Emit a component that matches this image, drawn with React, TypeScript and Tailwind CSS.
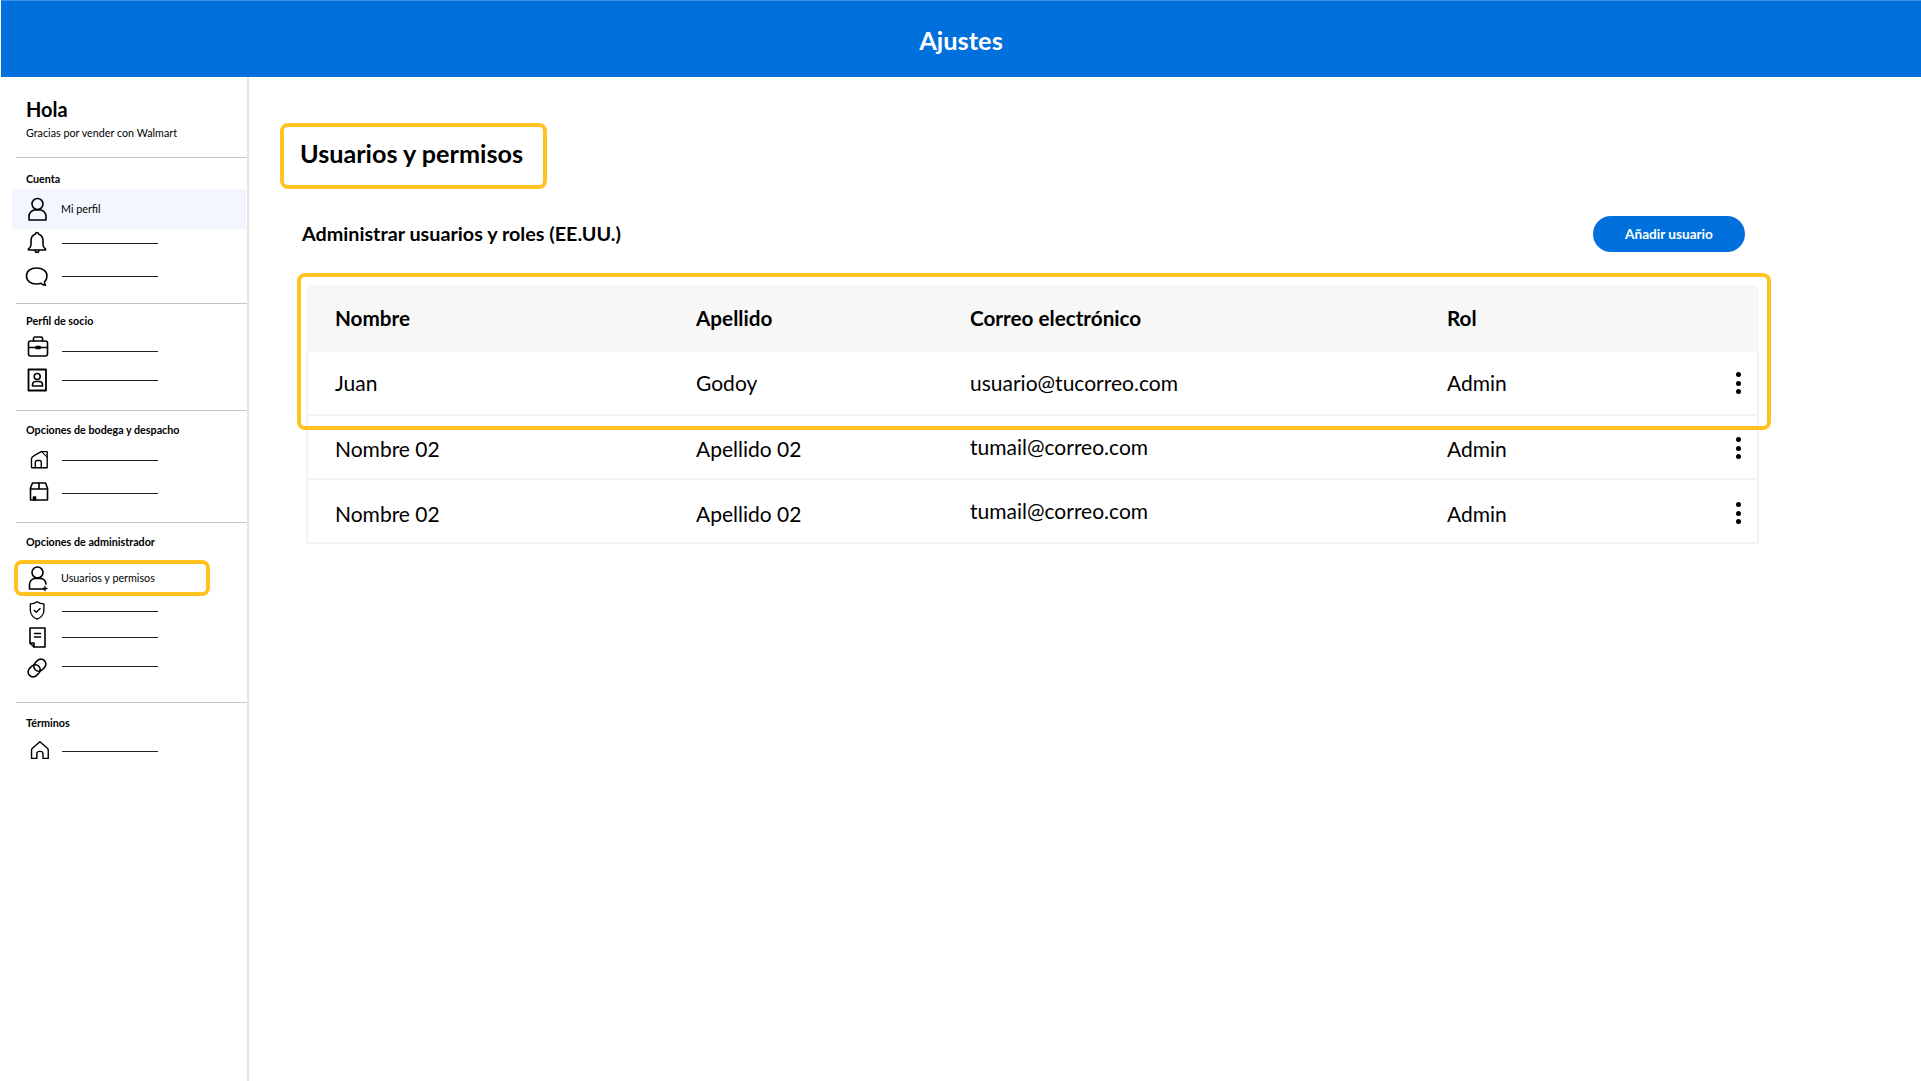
import type { ReactNode } from "react"

const font = "font-['Lato','Liberation_Sans',sans-serif]"

function Icon({ children }: { children: ReactNode }) {
  return (
    <svg viewBox="0 0 24 24" className="w-6 h-6 shrink-0 overflow-visible" fill="none" stroke="black" strokeWidth="1.6" strokeLinejoin="round" strokeLinecap="round">
      {children}
    </svg>
  )
}

const PersonIcon = () => (
  <Icon>
    <circle cx="12.5" cy="7" r="5.5" />
    <path d="M4 23v-4c0-3 3-5.5 5-6h7c2 .5 5 3 5 6v4z" />
  </Icon>
)
const BellIcon = () => (
  <Icon>
    <g transform="translate(-.5 -1)">
      <path d="M12.5 2.5c-1 0-1.5.6-1.5 1.400C8 5 6.500 7.500 6.500 10.500v4c0 2-1 3.500-2.500 4.500v1h17v-1c-1.500-1-2.500-2.500-2.500-4.500v-4c0-3-1.500-5.500-4.500-6.600 0-.8-.5-1.400-1.500-1.400z" />
      <path d="M10.500 20.500c.3 1.300 1 2 2 2s1.700-.7 2-2" />
    </g>
  </Icon>
)
const ChatIcon = () => (
  <Icon>
    <g transform="translate(-.5 1)">
      <path d="M12 3c-6 0-10 3.200-10 8s4 8 10 8c2 0 3.500-.3 4.500-.7 1 1.200 3 2 4.500 2-.6-.8-1-2-1-3.500 1.500-1.400 2.500-3.400 2.500-5.800 0-4.800-4.500-8-10.500-8z" />
    </g>
  </Icon>
)
const BriefcaseIcon = () => (
  <Icon>
    <g transform="translate(-.5 -5)">
      <path d="M9 7V4.500c0-.8.5-1.500 1.500-1.500h6c1 0 1.500.7 1.500 1.500V7" />
      <rect x="4" y="7" width="19" height="15" rx="2" />
      <path d="M4 13.500h19" />
      <rect x="11.500" y="12.500" width="4" height="2" fill="black" />
    </g>
  </Icon>
)
const BadgeIcon = () => (
  <Icon>
    <rect x="3.500" y="1.500" width="17.500" height="21" strokeWidth="1.800" />
    <circle cx="12.200" cy="8.500" r="3" />
    <path d="M7.500 18v-1.500c0-1.500 1.500-3 3-3h4c1.500 0 3 1.500 3 3V18z" />
  </Icon>
)
const StoreIcon = () => (
  <Icon>
    <g transform="translate(3.500 1.500) scale(.85)">
      <path d="M8 21.500V15c0-1 .7-2 2-2h3c1.300 0 2 1 2 2v6.500" />
      <path d="M7 7 15 2.500h7V21.500H8H4.500c-.5 0-1-.5-1-1V11c0-1.500 1.500-2.800 3.500-4z" />
      <path d="M16 3l6 6" strokeWidth="1.200" />
    </g>
  </Icon>
)
const BoxIcon = () => (
  <Icon>
    <g transform="translate(.5 -2)">
      <path d="M5 21V9l2-5h13l2 5v12z" />
      <path d="M5 10h17M13.500 4v6" />
      <rect x="8" y="18" width="2" height="3" fill="black" />
    </g>
  </Icon>
)
const UserAddIcon = () => (
  <Icon>
    <circle cx="12.500" cy="6.500" r="5.500" />
    <path d="M21 18c-.5-3-2.500-5-4.500-5.500h-7c-2.500.5-5 3-5 6V23h15" />
    <path d="M20 20.500v4M18 22.500h4" strokeWidth="1.300" />
  </Icon>
)
const ShieldIcon = () => (
  <Icon>
    <g transform="translate(1.500 1) scale(.85)">
      <path d="M12.500 2c2 1.500 5 2.500 8 2.500V12c0 5-4 9-8 10.500-4-1.500-8-5.500-8-10.500V4.500c3 0 6-1 8-2.500z" />
      <path d="M9 12l2.500 2.500L16 10" />
    </g>
  </Icon>
)
const DocIcon = () => (
  <Icon>
    <path d="M5 3h15v19H9l-4-4z" />
    <path d="M5 18h4v4" />
    <path d="M9.500 8.500h6M9.500 12h6" />
  </Icon>
)
const LinkIcon = () => (
  <Icon>
    <g transform="rotate(-45 12 14)">
      <rect x="1.500" y="9" width="13" height="10" rx="5" />
      <rect x="9.500" y="9" width="13" height="10" rx="5" />
    </g>
  </Icon>
)
const HomeIcon = () => (
  <Icon>
    <g transform="translate(3.900 .5) scale(.88)">
      <path d="M12.500 2.500 4 10c-.6.6-1 1.200-1 2v9.500h6V16c0-1.500 1.500-2.500 3.500-2.500S16 14.500 16 16v5.500h6V12c0-.8-.4-1.400-1-2z" />
    </g>
  </Icon>
)

function Label({ children, className }: { children: ReactNode; className?: string }) {
  return <div className={`pl-[10px] h-4 text-[10.75px] leading-4 font-bold text-black ${className}`}>{children}</div>
}

function Row({ icon, className }: { icon: ReactNode; className: string }) {
  return (
    <div className={`ml-[9px] flex items-center ${className}`}>
      <div className="w-7">{icon}</div>
      <div className="h-px w-24 ml-[9px] bg-[#222]" />
    </div>
  )
}

function Sidebar() {
  return (
    <aside className="w-[249px] shrink-0 border-r-2 border-[#e6e6e6]">
      <div className="h-[80px] pl-[26px] pt-5">
        <div className="text-xl leading-6 font-bold text-black">Hola</div>
        <div className="text-[10.75px] leading-4 mt-1 text-black">Gracias por vender con Walmart</div>
      </div>

      <section className="ml-4 h-[146px] border-t border-[#c4c4c4] pt-[13px]">
        <Label>Cuenta</Label>
        <div className="-ml-1 mt-0.5 h-10 w-[234px] pl-[13px] bg-[#f2f6fe] flex items-center">
          <div className="w-[36px]"><PersonIcon /></div>
          <span className="text-[10.75px] text-black">Mi perfil</span>
        </div>
        <Row icon={<BellIcon />} className="h-7" />
        <Row icon={<ChatIcon />} className="h-7 mt-[5px]" />
      </section>

      <section className="ml-4 h-[107px] border-t border-[#c4c4c4] pt-[9px]">
        <Label>Perfil de socio</Label>
        <Row icon={<BriefcaseIcon />} className="h-7 mt-2" />
        <Row icon={<BadgeIcon />} className="h-7 mt-px" />
      </section>

      <section className="ml-4 h-[112px] border-t border-[#c4c4c4] pt-[11px]">
        <Label>Opciones de bodega y despacho</Label>
        <Row icon={<StoreIcon />} className="h-7 mt-2" />
        <Row icon={<BoxIcon />} className="h-7 mt-[5px]" />
      </section>

      <section className="ml-4 h-[180px] border-t border-[#c4c4c4] pt-[11px]">
        <Label>Opciones de administrador</Label>
        <div className="-ml-0.5 mt-2.5 h-9 w-[196px] pl-[7px] border-4 border-[#ffc220] rounded-lg flex items-center">
          <div className="w-[36px]"><UserAddIcon /></div>
          <span className="text-[10.75px] text-black">Usuarios y permisos</span>
        </div>
        <Row icon={<ShieldIcon />} className="h-6 mt-[3px]" />
        <Row icon={<DocIcon />} className="h-6 mt-0.5" />
        <Row icon={<LinkIcon />} className="h-6 mt-[5px]" />
      </section>

      <section className="ml-4 border-t border-[#c4c4c4] pt-3">
        <Label>Términos</Label>
        <Row icon={<HomeIcon />} className="h-7 mt-1.5" />
      </section>
    </aside>
  )
}

// lower rows sit a bit under center in the mock, except the email column
const users = [
  { nombre: "Juan", apellido: "Godoy", correo: "usuario@tucorreo.com", rol: "Admin", shift: "", dots: "" },
  { nombre: "Nombre 02", apellido: "Apellido 02", correo: "tumail@correo.com", rol: "Admin", shift: "translate-y-0.5", dots: "translate-y-px" },
  { nombre: "Nombre 02", apellido: "Apellido 02", correo: "tumail@correo.com", rol: "Admin", shift: "translate-y-[3px]", dots: "translate-y-0.5" },
]

function Dots({ className }: { className: string }) {
  return (
    <div className={`flex flex-col gap-[3.5px] items-center ${className}`}>
      <span className="w-[5px] h-[5px] rounded-full bg-black" />
      <span className="w-[5px] h-[5px] rounded-full bg-black" />
      <span className="w-[5px] h-[5px] rounded-full bg-black" />
    </div>
  )
}

function UsersTable() {
  return (
    <div className="relative mt-[33px] ml-[26px] w-[1453px]">
      <div className="h-[67px] bg-[#f7f7f7] rounded-t pl-[29px] grid grid-cols-[361px_274px_477px_1fr] items-center text-[20.7px] font-bold text-black">
        <div>Nombre</div>
        <div>Apellido</div>
        <div>Correo electrónico</div>
        <div>Rol</div>
      </div>
      {users.map((u, i) => (
        <div key={i} className="h-[64px] border-x-2 border-b-2 border-[#f2f2f2] pl-[27px] pr-4 grid grid-cols-[361px_274px_477px_1fr_auto] items-center text-[21px] text-black">
          <div className={u.shift}>{u.nombre}</div>
          <div className={u.shift}>{u.apellido}</div>
          <div>{u.correo}</div>
          <div className={u.shift}>{u.rol}</div>
          <Dots className={u.dots} />
        </div>
      ))}
      <div className="absolute -left-[9px] -top-3 w-[1474px] h-[157px] border-4 border-[#ffc220] rounded-lg pointer-events-none" />
    </div>
  )
}

export default function App() {
  return (
    <div className={`h-screen overflow-hidden bg-white flex flex-col ${font}`}>
      <header className="h-[77px] shrink-0 ml-px bg-[#0071dc] border-t border-[#3d91e4] pt-0.5 flex items-center justify-center">
        <h1 className="text-[25.4px] font-bold text-white">Ajustes</h1>
      </header>
      <div className="flex flex-1 min-h-0">
        <Sidebar />
        <main className="flex-1 pl-[31px] pt-[46px]">
          <div className="w-[267px] h-[66px] border-4 border-[#ffc220] rounded-lg pl-4 pb-1 flex items-center">
            <h2 className="text-[25.2px] font-bold text-black whitespace-nowrap">Usuarios y permisos</h2>
          </div>
          <div className="mt-[27px] ml-[22px] w-[1443px] flex items-center justify-between">
            <h3 className="text-[19.75px] font-bold text-black">Administrar usuarios y roles (EE.UU.)</h3>
            <button className="w-[152px] h-9 rounded-full bg-[#0071dc] text-[13.6px] font-bold text-white">Añadir usuario</button>
          </div>
          <UsersTable />
        </main>
      </div>
    </div>
  )
}
